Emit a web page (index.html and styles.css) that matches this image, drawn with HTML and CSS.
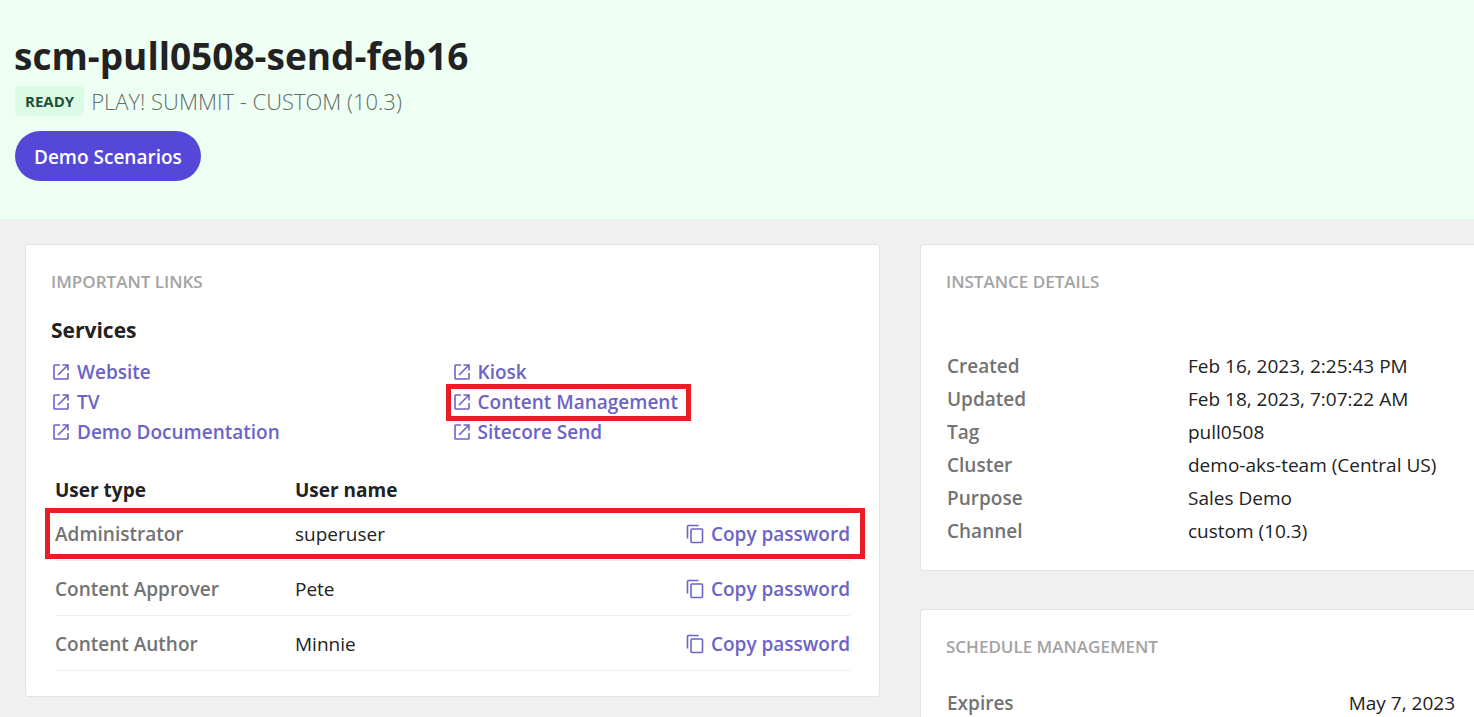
FILE: index.html
```html
<!DOCTYPE html>
<html lang="en">
<head>
<meta charset="utf-8">
<title>scm-pull0508-send-feb16</title>
<link rel="stylesheet" href="styles.css">
</head>
<body>
<svg class="sprite" aria-hidden="true">
  <symbol id="open" viewBox="0 0 18 18"><path d="M8 2H2.8Q2 2 2 2.8V15.2Q2 16 2.8 16H15.2Q16 16 16 15.2V10M10.500 2H16V7.500M15.500 2.500L6 12"/></symbol>
  <symbol id="copy" viewBox="0 0 18 20"><path d="M1.500 14.500V2.500Q1.500 1.500 2.500 1.500H12.500"/><rect x="5" y="5" width="11.500" height="13.500" rx="1"/></symbol>
</svg>
<header class="hero">
  <h1 class="title">scm-pull0508-send-feb16</h1>
  <div class="status"><span class="badge">READY</span><span class="template">PLAY! SUMMIT - CUSTOM (10.3)</span></div>
  <button class="primary" type="button">Demo Scenarios</button>
</header>
<main class="board">
  <section class="card links-card">
    <h2 class="label">IMPORTANT LINKS</h2>
    <h3 class="subtitle">Services</h3>
    <nav class="services" aria-label="Services">
      <a class="link" href="#"><svg class="open-icon"><use href="#open"/></svg>Website</a>
      <a class="link" href="#"><svg class="open-icon"><use href="#open"/></svg>Kiosk</a>
      <a class="link" href="#"><svg class="open-icon"><use href="#open"/></svg>TV</a>
      <a class="link marked" href="#"><svg class="open-icon"><use href="#open"/></svg>Content Management</a>
      <a class="link" href="#"><svg class="open-icon"><use href="#open"/></svg>Demo Documentation</a>
      <a class="link" href="#"><svg class="open-icon"><use href="#open"/></svg>Sitecore Send</a>
    </nav>
    <table class="users">
      <thead><tr><th class="col-type">User type</th><th>User name</th><td></td></tr></thead>
      <tbody>
        <tr class="marked-row"><th>Administrator</th><td>superuser</td><td class="action"><button class="copy" type="button"><svg class="copy-icon"><use href="#copy"/></svg>Copy password</button></td></tr>
        <tr><th>Content Approver</th><td>Pete</td><td class="action"><button class="copy" type="button"><svg class="copy-icon"><use href="#copy"/></svg>Copy password</button></td></tr>
        <tr><th>Content Author</th><td>Minnie</td><td class="action"><button class="copy" type="button"><svg class="copy-icon"><use href="#copy"/></svg>Copy password</button></td></tr>
      </tbody>
    </table>
  </section>
  <div class="side">
    <section class="card side-card">
      <h2 class="label">INSTANCE DETAILS</h2>
      <dl class="details">
        <dt>Created</dt><dd>Feb 16, 2023, 2:25:43 PM</dd>
        <dt>Updated</dt><dd>Feb 18, 2023, 7:07:22 AM</dd>
        <dt>Tag</dt><dd>pull0508</dd>
        <dt>Cluster</dt><dd>demo-aks-team (Central US)</dd>
        <dt>Purpose</dt><dd>Sales Demo</dd>
        <dt>Channel</dt><dd>custom (10.3)</dd>
      </dl>
    </section>
    <section class="card side-card">
      <h2 class="label">SCHEDULE MANAGEMENT</h2>
      <dl class="schedule"><dt>Expires</dt><dd>May 7, 2023</dd></dl>
    </section>
  </div>
</main>
</body>
</html>
```
FILE: styles.css
```css
* { box-sizing: border-box; }
html { overflow: hidden; }
body {
  margin: 0;
  background: #f0f0f0;
  color: #222;
  font: 400 19px/30px "Open Sans", "Noto Sans", sans-serif;
}
h1, h2, h3, dl, dd { margin: 0; }
button { font: inherit; border: 0; cursor: pointer; }
.sprite { position: absolute; width: 0; height: 0; }
svg { fill: none; stroke: currentColor; stroke-width: 1.6; flex: none; }

.hero { background: #eefff4; padding: 31px 14px 38px; }
.title { font-size: 37px; line-height: 50px; font-weight: 700; }
.status { display: flex; align-items: center; gap: 7px; margin: 5px 1px 15px; }
.badge {
  padding: 0 10px;
  border-radius: 5px;
  background: #dcfbe6;
  color: #1c5137;
  font-size: 15px;
  font-weight: 700;
}
.template { color: #646c67; font-size: 22px; font-weight: 300; }
.primary {
  display: block;
  height: 50px;
  margin-left: 1px;
  padding: 2px 19px 0;
  border-radius: 25px;
  background: #5548d9;
  color: #fff;
  font-weight: 600;
}

.board {
  display: grid;
  grid-template-columns: 855fr 554fr;
  gap: 40px;
  align-items: start;
  padding: 25px 0 0 25px;
}
.card { background: #fff; border: 1px solid #e3e3e3; border-radius: 3px; }
.links-card { padding: 22px 29px 26px 25px; }
.label { color: #a3a3a3; font-size: 17px; font-weight: 600; line-height: 30px; }
.subtitle { margin-top: 18px; font-size: 21px; font-weight: 700; }

.services {
  display: grid;
  grid-template-columns: 1fr 1fr;
  margin: 12px -2px 28px 0;
}
.link, .copy { display: flex; align-items: center; color: #6c63c7; font-weight: 600; text-decoration: none; }
.link { justify-self: start; gap: 7px; padding-left: 1px; position: relative; }
.open-icon { width: 18px; height: 18px; }
.marked::after {
  content: "";
  position: absolute;
  inset: -3px -13px -4px -6px;
  border: 5px solid #e81e26;
}

.users { width: calc(100% - 4px); margin-left: 4px; border-collapse: separate; border-spacing: 0; table-layout: fixed; }
.users th, .users td { height: 55px; padding: 2px 0 0; border-bottom: 1px solid #eee; text-align: left; }
.users thead th, .users thead td { height: 30px; padding: 0; }
.users thead th { font-weight: 700; }
.users .col-type { width: 240px; }
.users tbody th { color: #737373; font-weight: 600; }
.copy { gap: 7px; margin-left: auto; padding: 0; background: none; }
.copy-icon { width: 18px; height: 20px; }
.marked-row { position: relative; }
.marked-row td:last-child::after {
  content: "";
  position: absolute;
  inset: 2px -15px 2px -10px;
  border: 5px solid #e81e26;
  pointer-events: none;
}

.links-card { padding-bottom: 25px; }
.side { display: grid; gap: 38px; }
.side-card { padding: 22px 19px 22px 25px; border-right: 0; border-radius: 3px 0 0 3px; }
.details { display: grid; grid-template-columns: 241px 1fr; margin: 53px 0 0 1px; line-height: 33px; }
dt { color: #737373; font-weight: 600; }
.schedule { display: flex; justify-content: space-between; margin: 25px 0 0 1px; line-height: 33px; }
```
